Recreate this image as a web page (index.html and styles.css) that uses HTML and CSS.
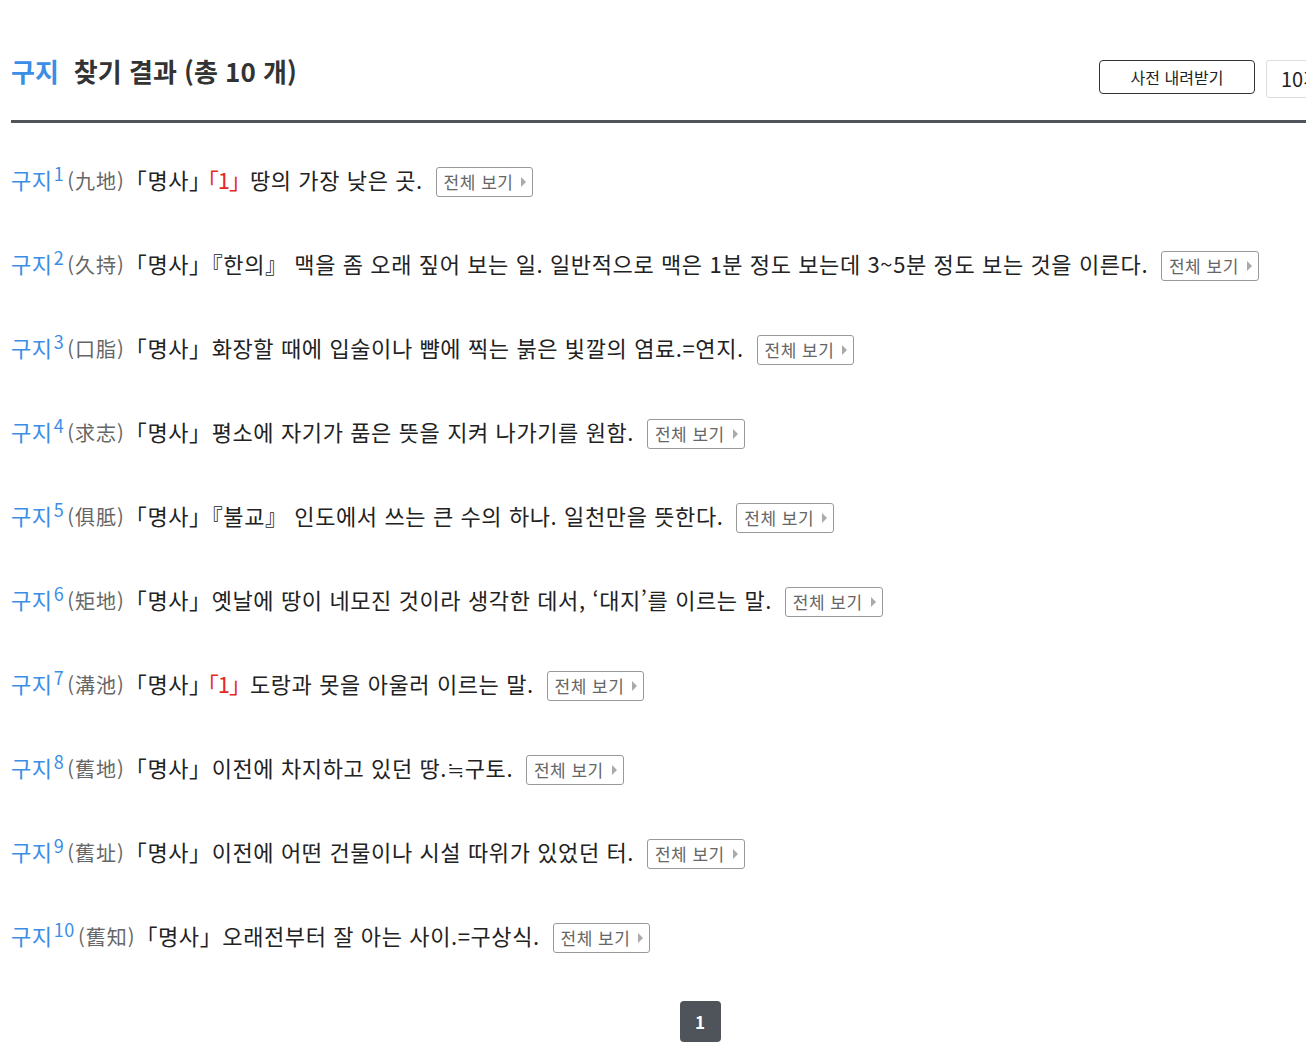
FILE: index.html
```html
<!DOCTYPE html>
<html lang="ko">

<head>
    <meta charset="UTF-8">
    <title>구지 찾기 결과</title>
    <link rel="stylesheet" href="styles.css">
</head>

<body>
    <div class="pagina">
        <div class="cabecalho">
            <h2 class="titulo"><span class="palavra">구지</span>찾기 결과 (총 10 개)</h2>
            <div class="ferramentas">
                <button class="botao_baixar">사전 내려받기</button>
                <div class="seletor">10개씩 보기</div>
            </div>
        </div>

        <ul class="lista">
            <li><span class="palavra">구지<sup>1</sup></span><span class="hanja">(九地)</span>「명사」<span class="vermelho">「1」</span>땅의 가장 낮은 곳. <a class="ver_tudo">전체 보기<i></i></a></li>
            <li><span class="palavra">구지<sup>2</sup></span><span class="hanja">(久持)</span>「명사」『한의』 맥을 좀 오래 짚어 보는 일. 일반적으로 맥은 1분 정도 보는데 3~5분 정도 보는 것을 이른다. <a class="ver_tudo">전체 보기<i></i></a></li>
            <li><span class="palavra">구지<sup>3</sup></span><span class="hanja">(口脂)</span>「명사」화장할 때에 입술이나 뺨에 찍는 붉은 빛깔의 염료.=연지. <a class="ver_tudo">전체 보기<i></i></a></li>
            <li><span class="palavra">구지<sup>4</sup></span><span class="hanja">(求志)</span>「명사」평소에 자기가 품은 뜻을 지켜 나가기를 원함. <a class="ver_tudo">전체 보기<i></i></a></li>
            <li><span class="palavra">구지<sup>5</sup></span><span class="hanja">(俱胝)</span>「명사」『불교』 인도에서 쓰는 큰 수의 하나. 일천만을 뜻한다. <a class="ver_tudo">전체 보기<i></i></a></li>
            <li><span class="palavra">구지<sup>6</sup></span><span class="hanja">(矩地)</span>「명사」옛날에 땅이 네모진 것이라 생각한 데서, ‘대지’를 이르는 말. <a class="ver_tudo">전체 보기<i></i></a></li>
            <li><span class="palavra">구지<sup>7</sup></span><span class="hanja">(溝池)</span>「명사」<span class="vermelho">「1」</span>도랑과 못을 아울러 이르는 말. <a class="ver_tudo">전체 보기<i></i></a></li>
            <li><span class="palavra">구지<sup>8</sup></span><span class="hanja">(舊地)</span>「명사」이전에 차지하고 있던 땅.≒구토. <a class="ver_tudo">전체 보기<i></i></a></li>
            <li><span class="palavra">구지<sup>9</sup></span><span class="hanja">(舊址)</span>「명사」이전에 어떤 건물이나 시설 따위가 있었던 터. <a class="ver_tudo">전체 보기<i></i></a></li>
            <li><span class="palavra">구지<sup>10</sup></span><span class="hanja">(舊知)</span>「명사」오래전부터 잘 아는 사이.=구상식. <a class="ver_tudo">전체 보기<i></i></a></li>
        </ul>

        <div class="paginacao">
            <span class="pagina_atual">1</span>
        </div>
    </div>
</body>

</html>
```

FILE: styles.css
```css
* {
    margin: 0;
    padding: 0;
    box-sizing: border-box;
}

body {
    font-family: "Noto Sans CJK KR", "Noto Sans", sans-serif;
    color: #222;
    overflow: hidden;
}

.pagina {
    width: 1389px;
    padding-left: 11px;
}

.cabecalho {
    display: flex;
    justify-content: space-between;
    align-items: flex-start;
    padding-top: 54px;
    padding-bottom: 22px;
    border-bottom: 3px solid #4e5459;
}

.titulo {
    font-size: 26px;
    line-height: 34px;
    font-weight: bold;
    color: #333;
}

.titulo .palavra {
    margin-right: 15px;
}

.palavra {
    color: #3a8ee6;
}

.ferramentas {
    display: flex;
    gap: 11px;
    margin-top: 6px;
}

.botao_baixar {
    width: 156px;
    height: 34px;
    background: #fff;
    border: 1px solid #333;
    border-radius: 4px;
    font-family: inherit;
    font-size: 16px;
    color: #222;
}

.seletor {
    width: 123px;
    height: 38px;
    border: 1px solid #ddd;
    border-radius: 3px;
    padding-left: 14px;
    font-size: 20px;
    line-height: 36px;
    white-space: nowrap;
    overflow: hidden;
}

.lista {
    list-style: none;
    margin-top: 41px;
}

.lista li {
    height: 30px;
    font-size: 22px;
    line-height: 30px;
    letter-spacing: 0.6px;
    margin-bottom: 54px;
    white-space: nowrap;
}

.lista li:last-child {
    margin-bottom: 0;
}

.lista sup {
    font-size: 18px;
    line-height: 0;
    vertical-align: 8px;
    margin-left: 1px;
}

.hanja {
    color: #666;
    font-size: 20px;
    margin-left: 3px;
    letter-spacing: 1px;
}

.vermelho {
    color: #e8281e;
    margin-left: -4px;
    letter-spacing: -1px;
}

.ver_tudo {
    display: inline-flex;
    align-items: center;
    height: 30px;
    padding: 0 6px 0 7px;
    margin-left: 6px;
    border: 1px solid #999;
    border-radius: 3px;
    font-size: 17px;
    letter-spacing: 0.5px;
    color: #666;
    vertical-align: baseline;
}

.ver_tudo i {
    width: 0;
    height: 0;
    margin-left: 8px;
    border-top: 5px solid transparent;
    border-bottom: 5px solid transparent;
    border-left: 5px solid #aaa;
}

.paginacao {
    margin-top: 51px;
    display: flex;
    justify-content: center;
}

.pagina_atual {
    width: 41px;
    height: 41px;
    background: #4e5459;
    border-radius: 4px;
    color: #fff;
    font-weight: bold;
    font-size: 17px;
    line-height: 41px;
    text-align: center;
}
```
